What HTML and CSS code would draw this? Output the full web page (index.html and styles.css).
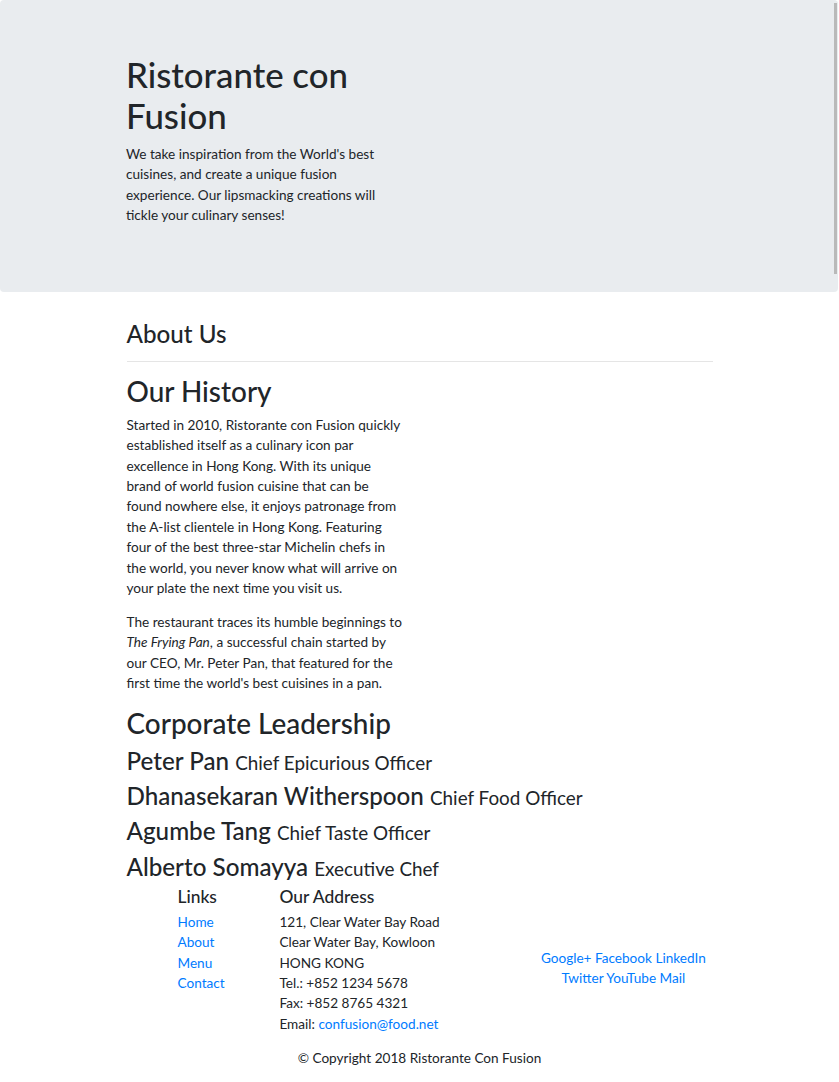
FILE: index.html
```html
<!DOCTYPE html>
<html lang="en">
<head>
<meta charset="utf-8">
<title>Ristorante con Fusion</title>
<link rel="stylesheet" href="styles.css">
</head>
<body>
<header class="jumbotron">
  <div class="container">
    <div class="row">
      <div class="col-half">
        <h1 class="display">Ristorante con Fusion</h1>
        <p class="lead-text">We take inspiration from the World's best cuisines, and create a unique fusion experience. Our lipsmacking creations will tickle your culinary senses!</p>
      </div>
    </div>
  </div>
</header>

<main class="container">
  <div class="section-title">
    <h3 class="h3">About Us</h3>
    <hr class="rule">
  </div>
  <div class="row">
    <div class="col-half">
      <h2 class="h2">Our History</h2>
      <p class="para">Started in 2010, Ristorante con Fusion quickly established itself as a culinary icon par excellence in Hong Kong. With its unique brand of world fusion cuisine that can be found nowhere else, it enjoys patronage from the A-list clientele in Hong Kong. Featuring four of the best three-star Michelin chefs in the world, you never know what will arrive on your plate the next time you visit us.</p>
      <p class="para">The restaurant traces its humble beginnings to <em>The Frying Pan</em>, a successful chain started by our CEO, Mr. Peter Pan, that featured for the first time the world's best cuisines in a pan.</p>
    </div>
  </div>
  <div class="leaders">
    <h2 class="h2">Corporate Leadership</h2>
    <h3 class="h3">Peter Pan <small class="role">Chief Epicurious Officer</small></h3>
    <h3 class="h3">Dhanasekaran Witherspoon <small class="role">Chief Food Officer</small></h3>
    <h3 class="h3">Agumbe Tang <small class="role">Chief Taste Officer</small></h3>
    <h3 class="h3">Alberto Somayya <small class="role">Executive Chef</small></h3>
  </div>
</main>

<footer class="footer">
  <div class="container">
    <div class="foot-row">
      <div class="col-links">
        <h5 class="h5">Links</h5>
        <ul class="link-list">
          <li><a class="link" href="#">Home</a></li>
          <li><a class="link" href="#">About</a></li>
          <li><a class="link" href="#">Menu</a></li>
          <li><a class="link" href="#">Contact</a></li>
        </ul>
      </div>
      <div class="col-address">
        <h5 class="h5">Our Address</h5>
        <address class="addr">
          121, Clear Water Bay Road<br>
          Clear Water Bay, Kowloon<br>
          HONG KONG<br>
          Tel.: +852 1234 5678<br>
          Fax: +852 8765 4321<br>
          Email: <a class="link" href="#">confusion@food.net</a>
        </address>
      </div>
      <div class="col-social">
        <div class="social">
          <a class="link" href="#">Google+</a>
          <a class="link" href="#">Facebook</a>
          <a class="link" href="#">LinkedIn</a>
          <a class="link" href="#">Twitter</a>
          <a class="link" href="#">YouTube</a>
          <a class="link" href="#">Mail</a>
        </div>
      </div>
    </div>
    <div class="copy-row">
      <p class="copy">© Copyright 2018 Ristorante Con Fusion</p>
    </div>
  </div>
</footer>
<div class="scrollbar"></div>
</body>
</html>
```
FILE: styles.css
```css
html, body {
  margin: 0;
  padding: 0;
}
body {
  font-family: Lato, "Open Sans", sans-serif;
  font-size: 13.6px;
  line-height: 20.4px;
  color: #212529;
  background: #fff;
}
.container {
  width: 586px;
  margin: 0 auto;
}
.row {
  display: flex;
}
.col-half {
  width: 278px;
}
.jumbotron {
  background: #e9ecef;
  border-radius: 4px;
  margin: 0 1px 27.2px 0;
  padding: 55.4px 0 53.4px;
}
.display {
  font-size: 34.8px;
  line-height: 40.8px;
  font-weight: 500;
  margin: 0 0 6.8px;
}
.lead-text {
  margin: 0 0 13.6px;
}
.h2, .h3, .h5 {
  font-weight: 500;
  margin: 0 0 6.8px;
}
.h2 {
  font-size: 27.9px;
  line-height: 32.64px;
}
.h3 {
  font-size: 24.2px;
  line-height: 28.56px;
}
.h5 {
  font-size: 17.4px;
  line-height: 20.4px;
  margin-top: -1px;
  margin-bottom: 4.3px;
}
.role {
  font-size: 78%;
  font-weight: 400;
  line-height: 1;
}
.section-title .h3 {
  margin-top: 1px;
}
.rule {
  border: 0;
  border-top: 1px solid rgba(0,0,0,.1);
  margin: 12.6px 0 13.6px;
}
.para {
  margin: 0 0 13.6px;
}
.link {
  color: #007bff;
  text-decoration: none;
}
.foot-row {
  display: flex;
  margin: 0 -12.75px;
}
.col-links, .col-address, .col-social {
  padding: 0 12.75px;
  box-sizing: border-box;
}
.col-links {
  width: 102px;
  margin-left: 51px;
}
.col-address {
  width: 255px;
}
.col-social {
  width: 204px;
  align-self: center;
}
.social {
  text-align: center;
}
.link-list {
  list-style: none;
  margin: 0 0 13.6px;
  padding: 0;
}
.addr {
  font-style: normal;
  margin: 0 0 13.6px;
}
.copy-row {
  display: flex;
  justify-content: center;
}
.copy {
  margin: 0 0 13.6px;
}
.scrollbar {
  position: fixed;
  top: 3px;
  right: 2px;
  width: 3px;
  height: 271px;
  background: #b9b9b9;
}
```
